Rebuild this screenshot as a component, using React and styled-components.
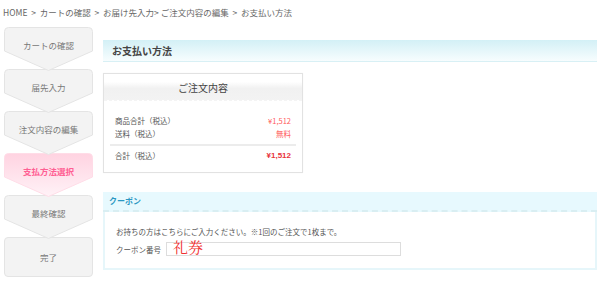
import styled, { createGlobalStyle } from 'styled-components'

const GlobalStyle = createGlobalStyle`
  html, body {
    margin: 0;
    padding: 0;
    background: #fff;
  }
  body {
    font-family: "Noto Sans CJK JP", "Noto Sans", sans-serif;
    color: #555;
  }
`

const Page = styled.div`
  width: 600px;
  height: 291px;
  overflow: hidden;
`

const Breadcrumb = styled.div`
  height: 22px;
  padding-left: 3px;
  font-size: 8.5px;
  line-height: 24px;
  color: #666;
  white-space: nowrap;
`

const Body = styled.div`
  display: flex;
  align-items: flex-start;
`

const Steps = styled.div`
  display: flex;
  flex-direction: column;
  width: 89px;
  margin: 5px 0 0 4px;
`

const Step = styled.div`
  position: relative;
  height: 42px;
  z-index: ${p => p.$z};
`

const StepShape = styled.svg`
  position: absolute;
  left: 0;
  top: 0;
  width: 89px;
  height: 45px;
`

const StepLabel = styled.div`
  position: relative;
  height: 36px;
  line-height: 36px;
  text-align: center;
  font-size: 8.5px;
  color: ${p => (p.$active ? '#ff5f93' : '#777')};
  font-weight: ${p => (p.$active ? 700 : 400)};
`

const LastStep = styled.div`
  height: 38px;
  line-height: 38px;
  text-align: center;
  font-size: 8.5px;
  color: #777;
  background: #f3f3f3;
  border: 1px solid #e4e4e4;
  border-radius: 4px;
`

const Main = styled.div`
  width: 494px;
  margin: 18px 0 0 10px;
`

const PageTitle = styled.div`
  height: 21px;
  line-height: 21px;
  padding-left: 9px;
  font-size: 10px;
  font-weight: 700;
  color: #444;
  background: linear-gradient(#d3f0f6, #f7fdfe);
  border-bottom: 1px solid #d8f0f5;
`

const OrderBox = styled.div`
  width: 198px;
  margin-top: 11px;
  border: 1px solid #e2e2e2;
  box-shadow: 0 0 1px rgba(0, 0, 0, 0.06);
  padding-bottom: 10px;
`

const OrderTitle = styled.div`
  height: 26px;
  line-height: 28px;
  text-align: center;
  font-size: 10px;
  color: #444;
  background: linear-gradient(#fff 0%, #fff 30%, #f1f1f1 55%, #f3f3f3 100%);
  border-bottom: 1px dashed #f4f4f4;
`

const OrderRows = styled.div`
  padding: 13px 6px 0 6px;
`

const Row = styled.div`
  display: flex;
  justify-content: space-between;
  height: 13px;
  line-height: 13px;
  padding: 0 5px;
  font-size: 7.5px;
  color: #555;
`

const Price = styled.span`
  color: ${p => (p.$strong ? '#e8323c' : '#ff5a5a')};
  font-weight: ${p => (p.$strong ? 700 : 400)};
  font-family: ${p => (p.$strong ? '"Liberation Sans", sans-serif' : 'inherit')};
  font-size: ${p => (p.$strong ? '8px' : '7.5px')};
`

const Divider = styled.div`
  height: 2px;
  background: #ececec;
  margin: 4px 0 3px;
`

const Coupon = styled.div`
  margin-top: 19px;
  border: 2px solid #e6f6fa;
  border-top: none;
`

const CouponHead = styled.div`
  height: 18px;
  line-height: 18px;
  padding-left: 6px;
  font-size: 8px;
  font-weight: 700;
  color: #2b97c2;
  background: #e7f9fe;
  border-bottom: 2px dashed #d9eef2;
  margin: 0 -2px;
`

const CouponBody = styled.div`
  padding: 13px 0 12px 11px;
  font-size: 7.5px;
  color: #555;
`

const Note = styled.div`
  height: 14px;
  line-height: 14px;
`

const Field = styled.div`
  display: flex;
  align-items: center;
  margin-top: 3px;
  gap: 5px;
`

const Input = styled.div`
  position: relative;
  width: 233px;
  height: 12px;
  border: 1px solid #ddd;
  background: #fff;
`

const InputText = styled.span`
  position: absolute;
  left: 6px;
  top: -4px;
  font-family: "Noto Serif CJK JP", "Liberation Serif", serif;
  font-size: 15px;
  line-height: 16px;
  color: #f03030;
`

const steps = ['カートの確認', '届先入力', '注文内容の編集', '支払方法選択', '最終確認']

function StepArrow({ active, id }) {
  return (
    <StepShape viewBox="0 0 89 45">
      <defs>
        <linearGradient id={id} x1="0" y1="0" x2="0" y2="1">
          <stop offset="0" stopColor={active ? '#ffd3e1' : '#f3f3f3'} />
          <stop offset="1" stopColor={active ? '#fff2f7' : '#f3f3f3'} />
        </linearGradient>
      </defs>
      <path
        d="M4.5,0.5 H84.5 Q88.5,0.5 88.5,4.5 V24 L44.5,43.5 L0.5,24 V4.5 Q0.5,0.5 4.5,0.5 Z"
        fill={`url(#${id})`}
        stroke={active ? '#ffdce7' : '#e4e4e4'}
        strokeWidth="1"
      />
    </StepShape>
  )
}

export default function App() {
  return (
    <Page>
      <GlobalStyle />
      <Breadcrumb>HOME &nbsp;&gt;&nbsp; カートの確認 &nbsp;&gt;&nbsp; お届け先入力&gt; ご注文内容の編集 &nbsp;&gt;&nbsp; お支払い方法</Breadcrumb>
      <Body>
        <Steps>
          {steps.map((s, i) => (
            <Step key={s} $z={10 - i}>
              <StepArrow active={i === 3} id={`st${i}`} />
              <StepLabel $active={i === 3}>{s}</StepLabel>
            </Step>
          ))}
          <LastStep>完了</LastStep>
        </Steps>
        <Main>
          <PageTitle>お支払い方法</PageTitle>
          <OrderBox>
            <OrderTitle>ご注文内容</OrderTitle>
            <OrderRows>
              <Row><span>商品合計（税込）</span><Price>¥1,512</Price></Row>
              <Row><span>送料（税込）</span><Price>無料</Price></Row>
              <Divider />
              <Row><span>合計（税込）</span><Price $strong>¥1,512</Price></Row>
            </OrderRows>
          </OrderBox>
          <Coupon>
            <CouponHead>クーポン</CouponHead>
            <CouponBody>
              <Note>お持ちの方はこちらにご入力ください。※1回のご注文で1枚まで。</Note>
              <Field>
                <span>クーポン番号</span>
                <Input><InputText>礼券</InputText></Input>
              </Field>
            </CouponBody>
          </Coupon>
        </Main>
      </Body>
    </Page>
  )
}
